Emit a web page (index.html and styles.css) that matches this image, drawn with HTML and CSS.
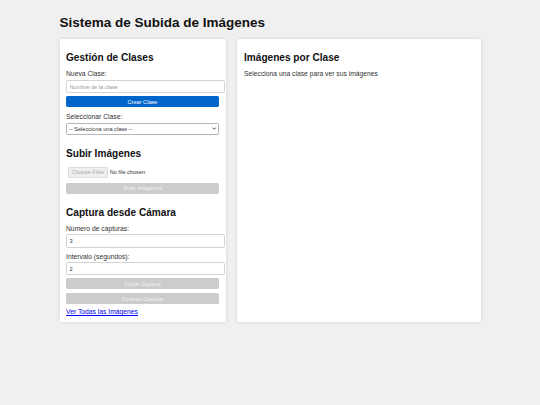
FILE: index.html
```html
<!DOCTYPE html>
<html lang="es">
<head>
<meta charset="utf-8">
<title>Sistema de Subida de Imágenes</title>
<link rel="stylesheet" href="styles.css">
</head>
<body>
<div class="container">
  <h1 class="title">Sistema de Subida de Imágenes</h1>
  <div class="main">
    <section class="panel panel-left">
      <h2 class="section-title first">Gestión de Clases</h2>
      <label class="field-label" for="nueva">Nueva Clase:</label>
      <input class="text-input" id="nueva" type="text" placeholder="Nombre de la clase">
      <button class="btn btn-primary" type="button">Crear Clase</button>
      <label class="field-label" for="sel">Seleccionar Clase:</label>
      <div class="select-wrap">
        <select class="select" id="sel">
          <option>-- Selecciona una clase --</option>
        </select>
        <svg class="select-arrow" viewBox="0 0 6 4" aria-hidden="true"><path d="M0.8 0.8 L3 3 L5.2 0.8" fill="none" stroke="#333" stroke-width="1.1"/></svg>
      </div>

      <h2 class="section-title">Subir Imágenes</h2>
      <div class="file-row">
        <span class="file-btn">Choose Files</span><span class="file-text">No file chosen</span>
      </div>
      <button class="btn btn-disabled" type="button" disabled>Subir Imágenes</button>

      <h2 class="section-title">Captura desde Cámara</h2>
      <label class="field-label" for="num">Número de capturas:</label>
      <input class="text-input" id="num" type="number" value="3">
      <label class="field-label after-input" for="int">Intervalo (segundos):</label>
      <input class="text-input" id="int" type="number" value="2">
      <button class="btn btn-disabled" type="button" disabled>Iniciar Captura</button>
      <button class="btn btn-disabled" type="button" disabled>Detener Captura</button>
      <a class="link" href="#">Ver Todas las Imágenes</a>
    </section>
    <section class="panel panel-right">
      <h2 class="section-title first">Imágenes por Clase</h2>
      <p class="hint">Selecciona una clase para ver sus imágenes</p>
    </section>
  </div>
</div>
</body>
</html>
```
FILE: styles.css
```css
html, body {
  margin: 0;
  padding: 0;
}
body {
  background: #f0f0f0;
  font-family: "Liberation Sans", Arial, sans-serif;
  color: #333;
  font-size: 6.75px;
  padding: 15px 0;
}
.container {
  width: 421px;
  margin: 0 auto;
}
.title {
  font-size: 13.5px;
  font-weight: bold;
  color: #111;
  margin: 0 0 8.5px;
  line-height: 15.5px;
}
.main {
  display: flex;
  gap: 11px;
  align-items: stretch;
}
.panel {
  background: #fff;
  border-radius: 2px;
  box-shadow: 0 0 4px rgba(0, 0, 0, 0.12);
  box-sizing: border-box;
}
.panel-left {
  flex: 0 0 166.5px;
  padding: 6.5px 7px 6.3px 6.5px;
  display: flex;
  flex-direction: column;
  align-items: flex-start;
}
.panel-right {
  flex: 1;
  padding: 6.5px 7px 6.3px 7px;
}
.section-title {
  font-size: 10.1px;
  font-weight: bold;
  color: #111;
  line-height: 11.6px;
  margin: 9px 0 6.5px;
}
.section-title.first {
  margin-top: 6.9px;
}
.field-label {
  display: block;
  margin-bottom: 1.5px;
  line-height: 7.8px;
}
.field-label.after-input {
  margin-top: 2px;
}
.text-input {
  box-sizing: content-box;
  width: 100%;
  height: 5.5px;
  padding: 3px 1.5px 3px 2.5px;
  border: 1px solid #d4d4d4;
  border-radius: 1.7px;
  font-family: inherit;
  font-size: 5.6px;
  color: #333;
  margin: 0 0 3px;
  background: #fff;
  outline: none;
  -moz-appearance: textfield;
}
.text-input::placeholder {
  color: #999;
}
.text-input::-webkit-outer-spin-button,
.text-input::-webkit-inner-spin-button {
  -webkit-appearance: none;
  margin: 0;
}
.btn {
  width: 100%;
  height: 11px;
  border: none;
  border-radius: 1.7px;
  font-family: inherit;
  font-size: 5.6px;
  color: #fff;
  padding: 0;
  margin: 0 0 4px;
  cursor: pointer;
}
.btn-primary {
  background: #0066cc;
  margin-bottom: 6px;
}
.btn-disabled {
  background: #cccccc;
  color: #f2f2f2;
  cursor: not-allowed;
}
.select-wrap {
  position: relative;
  width: 100%;
  margin-bottom: 4px;
}
.select {
  display: block;
  width: 100%;
  height: 12px;
  font-family: inherit;
  font-size: 5.6px;
  color: #333;
  border: 1px solid #b5b5b5;
  border-radius: 1.7px;
  background: #fff;
  padding: 0 2px;
  margin: 0;
  -webkit-appearance: none;
  appearance: none;
}
.select-arrow {
  position: absolute;
  right: 3px;
  top: 4.5px;
  width: 4.5px;
  height: 3px;
  pointer-events: none;
}
.file-row {
  display: flex;
  align-items: center;
  margin: 1px 0 4.5px 2px;
  font-size: 5.6px;
}
.file-btn {
  border: 1px solid #ddd;
  background: #efefef;
  color: #aaa;
  padding: 1.5px 2.5px;
  border-radius: 1px;
  margin-right: 2px;
  line-height: 6.5px;
}
.file-text {
  color: #333;
}
.link {
  color: #0000ee;
  text-decoration: underline;
  font-size: 6.75px;
  line-height: 7.8px;
}
.hint {
  margin: 0;
  line-height: 7.8px;
}
```
